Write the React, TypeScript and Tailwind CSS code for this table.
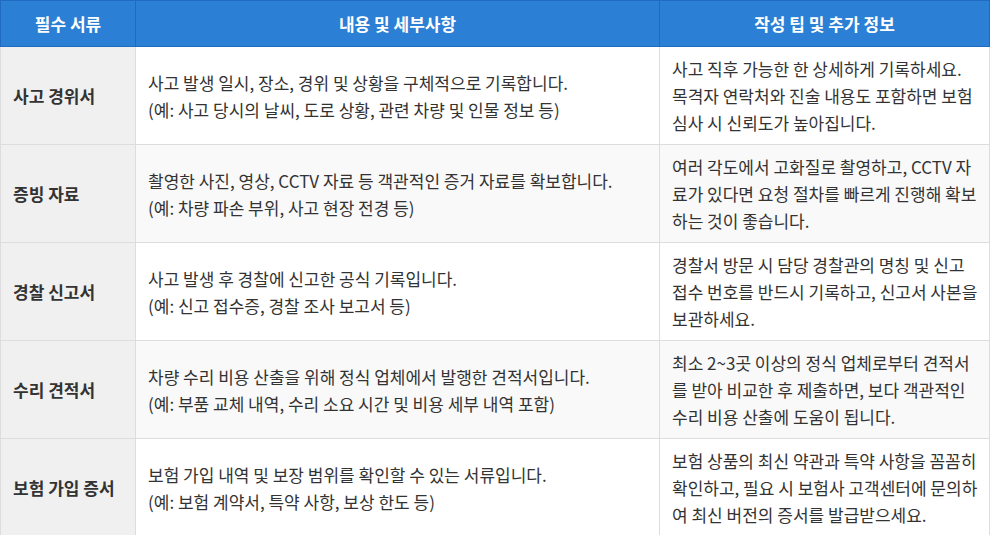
const ROWS: { doc: string; detail: string[]; tip: string }[] = [
  {
    doc: "사고 경위서",
    detail: [
      "사고 발생 일시, 장소, 경위 및 상황을 구체적으로 기록합니다.",
      "(예: 사고 당시의 날씨, 도로 상황, 관련 차량 및 인물 정보 등)",
    ],
    tip: "사고 직후 가능한 한 상세하게 기록하세요. 목격자 연락처와 진술 내용도 포함하면 보험 심사 시 신뢰도가 높아집니다.",
  },
  {
    doc: "증빙 자료",
    detail: [
      "촬영한 사진, 영상, CCTV 자료 등 객관적인 증거 자료를 확보합니다.",
      "(예: 차량 파손 부위, 사고 현장 전경 등)",
    ],
    tip: "여러 각도에서 고화질로 촬영하고, CCTV 자료가 있다면 요청 절차를 빠르게 진행해 확보하는 것이 좋습니다.",
  },
  {
    doc: "경찰 신고서",
    detail: [
      "사고 발생 후 경찰에 신고한 공식 기록입니다.",
      "(예: 신고 접수증, 경찰 조사 보고서 등)",
    ],
    tip: "경찰서 방문 시 담당 경찰관의 명칭 및 신고 접수 번호를 반드시 기록하고, 신고서 사본을 보관하세요.",
  },
  {
    doc: "수리 견적서",
    detail: [
      "차량 수리 비용 산출을 위해 정식 업체에서 발행한 견적서입니다.",
      "(예: 부품 교체 내역, 수리 소요 시간 및 비용 세부 내역 포함)",
    ],
    tip: "최소 2~3곳 이상의 정식 업체로부터 견적서를 받아 비교한 후 제출하면, 보다 객관적인 수리 비용 산출에 도움이 됩니다.",
  },
  {
    doc: "보험 가입 증서",
    detail: [
      "보험 가입 내역 및 보장 범위를 확인할 수 있는 서류입니다.",
      "(예: 보험 계약서, 특약 사항, 보상 한도 등)",
    ],
    tip: "보험 상품의 최신 약관과 특약 사항을 꼼꼼히 확인하고, 필요 시 보험사 고객센터에 문의하여 최신 버전의 증서를 발급받으세요.",
  },
];

const TH_CLASS =
  "border border-[#1e6bc0] bg-[#2b7fd5] px-3 py-3 text-center text-[17px] font-bold leading-[21px] text-white";

export default function App() {
  return (
    <div
      className="bg-white"
      style={{ fontFamily: '"Noto Sans CJK KR", "Noto Sans", sans-serif' }}
    >
      <table className="w-[990px] table-fixed border-collapse text-[17px] text-[#333]">
        <colgroup>
          <col className="w-[135px]" />
          <col className="w-[524px]" />
          <col />
        </colgroup>
        <thead>
          <tr>
            <th className={TH_CLASS}>필수 서류</th>
            <th className={TH_CLASS}>내용 및 세부사항</th>
            <th className={TH_CLASS}>작성 팁 및 추가 정보</th>
          </tr>
        </thead>
        <tbody>
          {ROWS.map((row, i) => {
            const cellBg = i % 2 === 1 ? "bg-[#f9f9f9]" : "bg-white";
            return (
              <tr key={row.doc}>
                <td className="border border-[#dddddd] bg-[#f0f0f0] px-3 py-2 align-middle font-bold leading-[27px]">
                  {row.doc}
                </td>
                <td
                  className={`border border-[#dddddd] ${cellBg} px-3 py-2 align-middle leading-[27px]`}
                >
                  {row.detail.map((line) => (
                    <div key={line}>{line}</div>
                  ))}
                </td>
                <td
                  className={`border border-[#dddddd] ${cellBg} py-2 pl-3 pr-2 align-middle leading-[27px]`}
                >
                  {row.tip}
                </td>
              </tr>
            );
          })}
        </tbody>
      </table>
    </div>
  );
}
